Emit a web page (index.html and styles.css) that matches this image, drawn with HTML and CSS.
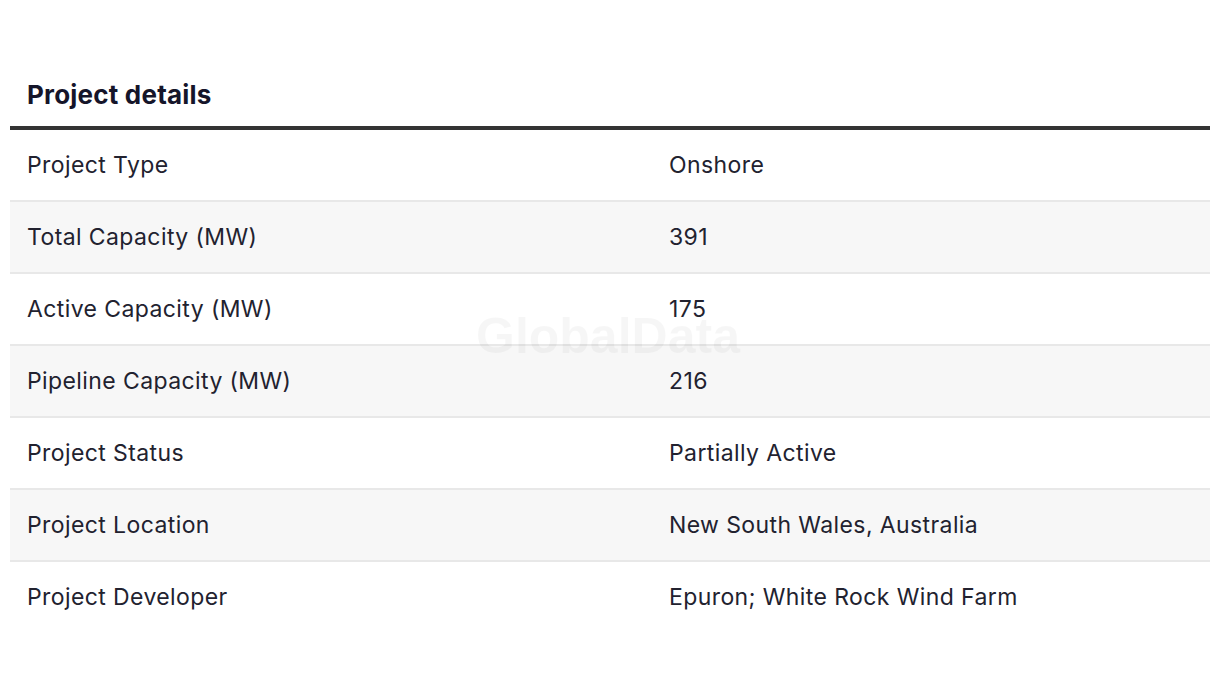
FILE: index.html
```html
<!DOCTYPE html>
<html lang="en">
<head>
<meta charset="utf-8">
<title>Project details</title>
<link rel="stylesheet" href="styles.css">
</head>
<body>
<section class="panel">
  <h2 class="title">Project details</h2>
  <div class="table-wrap">
    <table class="details">
      <tbody>
        <tr><td class="label">Project Type</td><td class="value">Onshore</td></tr>
        <tr><td class="label">Total Capacity (MW)</td><td class="value">391</td></tr>
        <tr><td class="label">Active Capacity (MW)</td><td class="value">175</td></tr>
        <tr><td class="label">Pipeline Capacity (MW)</td><td class="value">216</td></tr>
        <tr><td class="label">Project Status</td><td class="value">Partially Active</td></tr>
        <tr><td class="label">Project Location</td><td class="value">New South Wales, Australia</td></tr>
        <tr><td class="label">Project Developer</td><td class="value">Epuron; White Rock Wind Farm</td></tr>
      </tbody>
    </table>
    <div class="watermark">GlobalData</div>
  </div>
</section>
</body>
</html>
```
FILE: styles.css
```css
html, body {
  margin: 0;
  padding: 0;
  background: #ffffff;
}
body {
  font-family: "Inter", "Liberation Sans", sans-serif;
  color: #1d1d2b;
}
.panel {
  padding: 78px 10px 0 10px;
}
.title {
  margin: 0;
  padding: 1px 17px 16px 17px;
  font-size: 26px;
  line-height: 31px;
  font-weight: 700;
  letter-spacing: 0.2px;
  color: #15152a;
}
.table-wrap {
  position: relative;
}
.details {
  width: 100%;
  border-collapse: collapse;
  border-top: 4px solid #333333;
}
.details tr {
  border-bottom: 2px solid #e8e8e8;
}
.details tr:last-child {
  border-bottom: none;
}
.details tr:nth-child(even) {
  background: #f7f7f7;
}
.details td {
  height: 70px;
  padding: 0 17px;
  font-size: 23px;
  line-height: 30px;
  letter-spacing: 0.4px;
  vertical-align: middle;
  color: #22222f;
}
.details td.label {
  width: 608px;
}
.watermark {
  position: absolute;
  left: 466px;
  top: 185px;
  font-family: "Liberation Sans", "Arial", sans-serif;
  font-size: 50px;
  line-height: 50px;
  font-weight: 700;
  color: rgba(0, 0, 0, 0.035);
  pointer-events: none;
}
```
